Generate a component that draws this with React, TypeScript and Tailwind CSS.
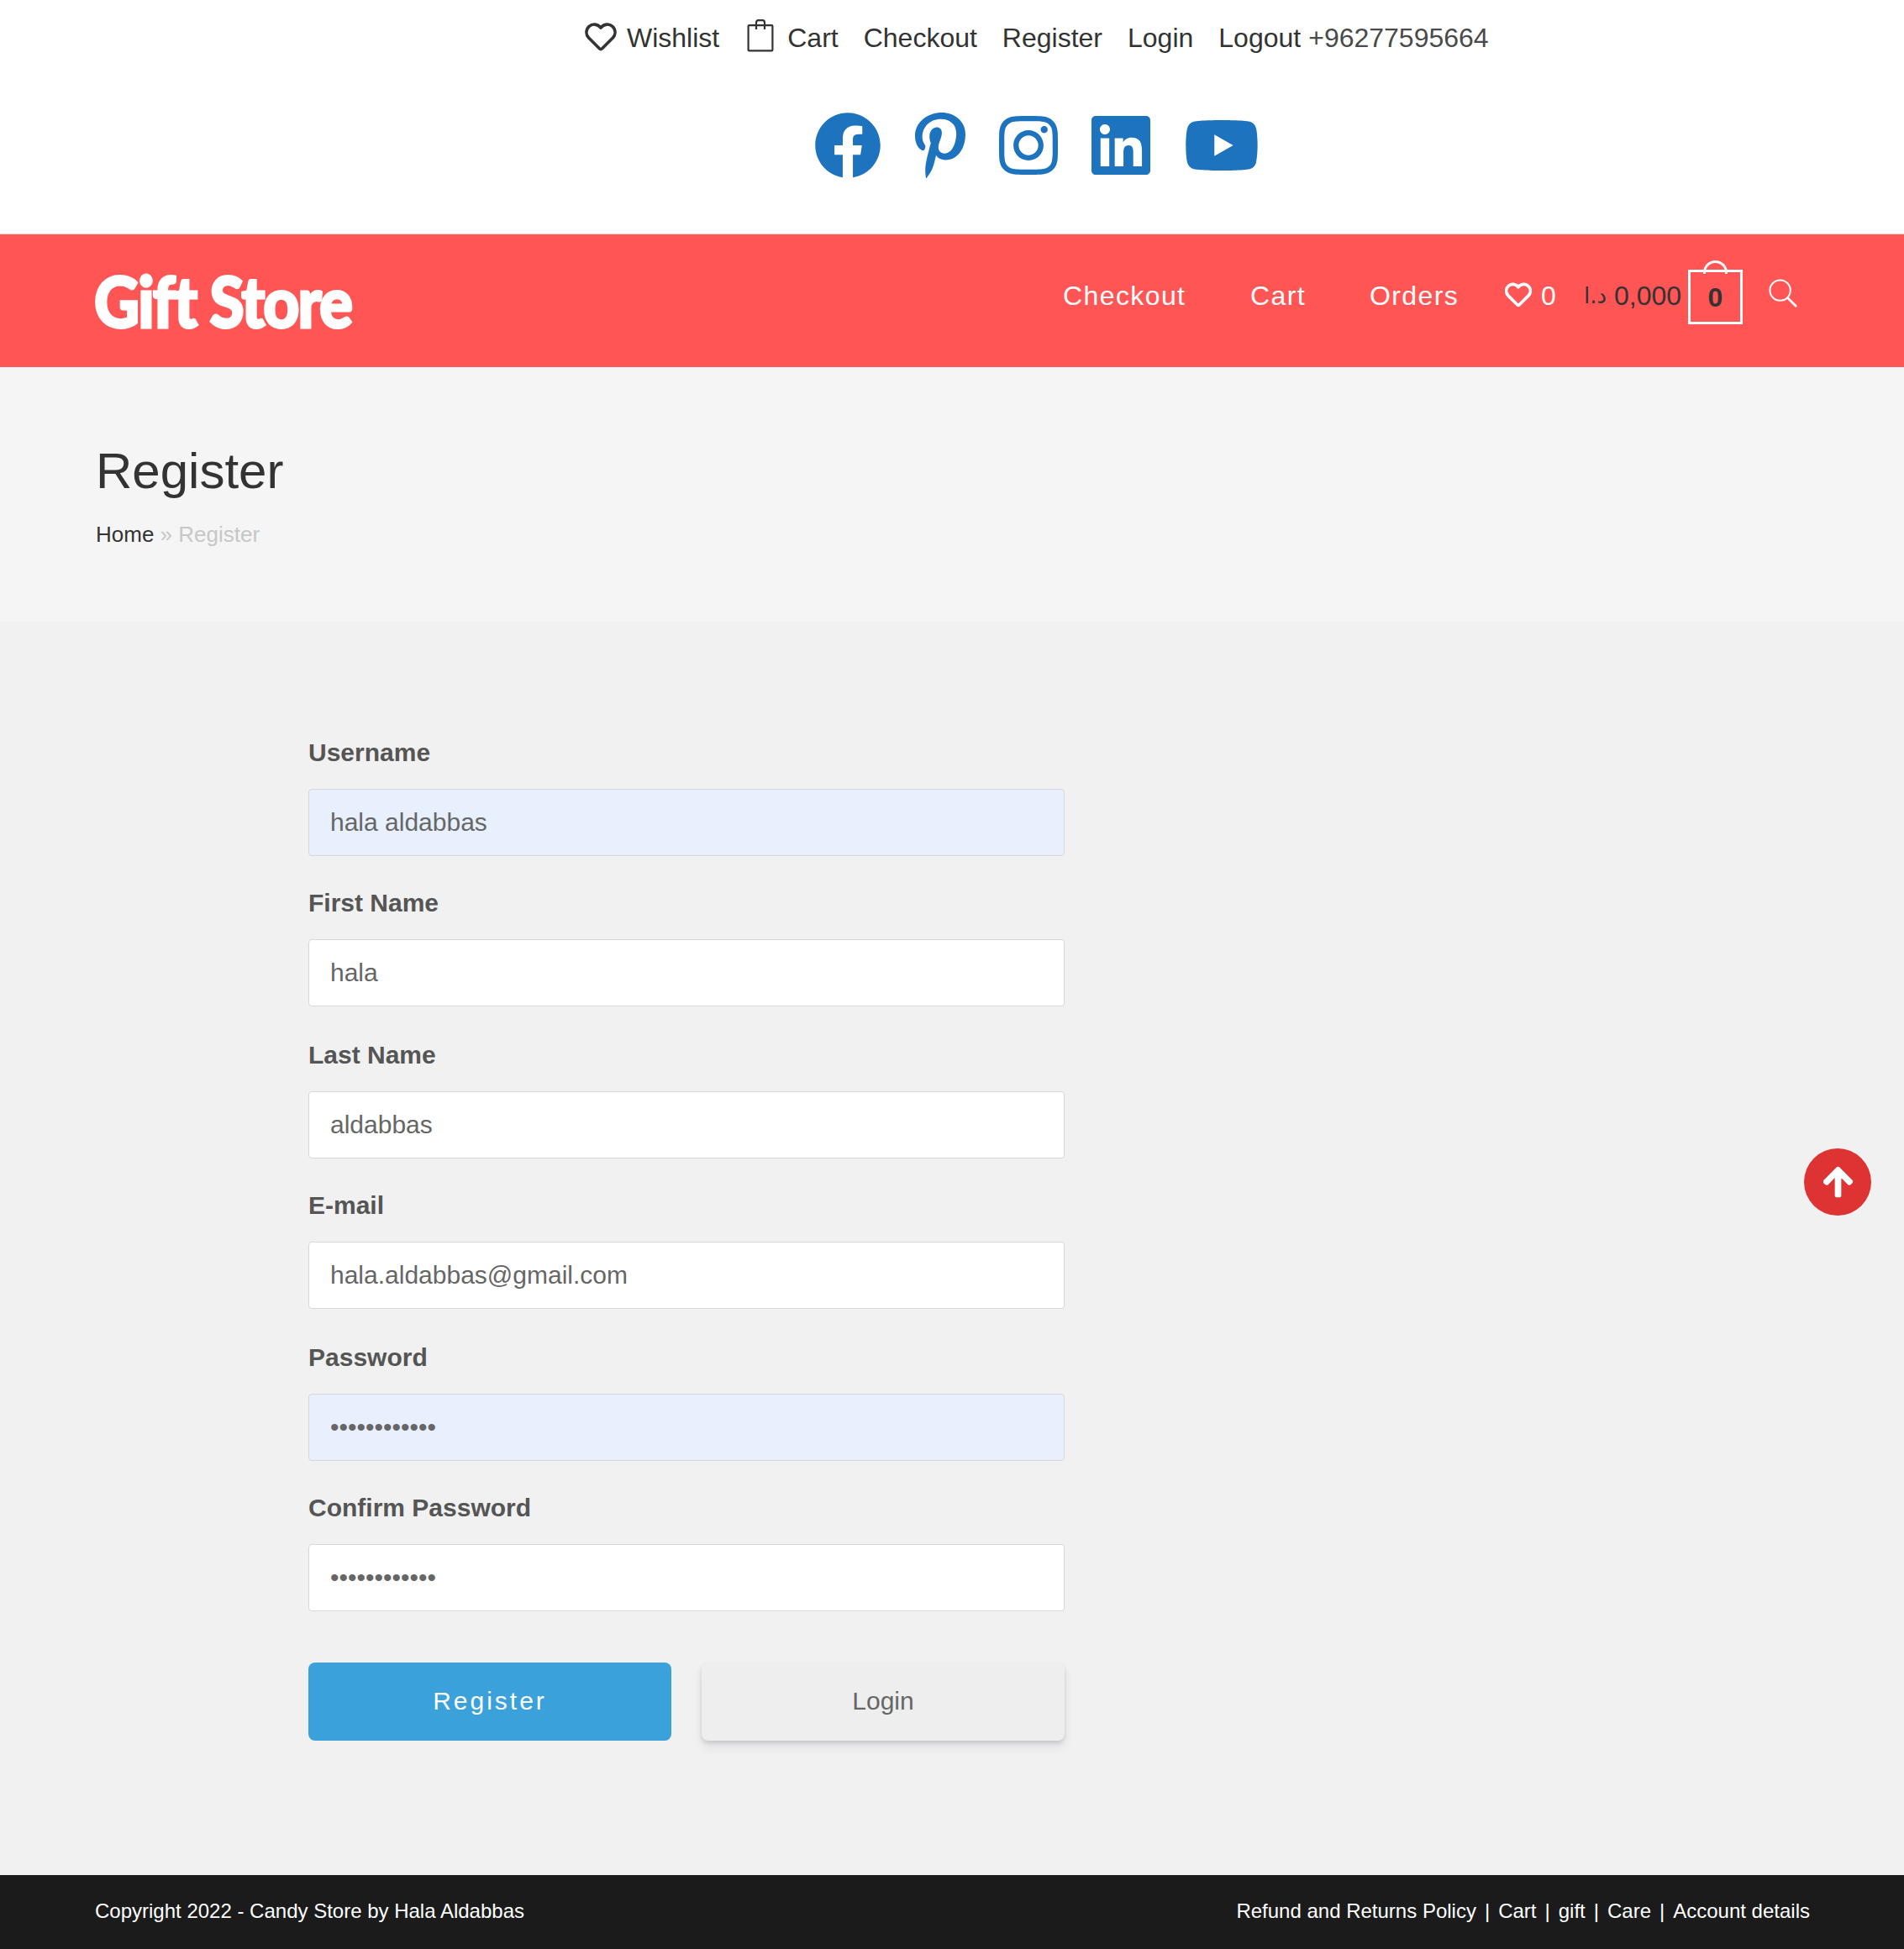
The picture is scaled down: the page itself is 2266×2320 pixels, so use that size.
import React from "react";
import { FaFacebook, FaPinterestP, FaInstagram, FaLinkedin, FaYoutube, FaArrowUp } from "react-icons/fa";

function Heart({ className }: { className: string }) {
  return (
    <svg viewBox="0 0 38 34" className={className} fill="none" stroke="currentColor" strokeLinejoin="round">
      <path d="M19 6 C15 1.2 9 1 5.2 4.3 C1 8.5 1 14 4.6 18 L17.6 31 Q19 32.2 20.4 31 L33.4 18 C37 14 37 8.5 32.8 4.3 C29 1 23 1.2 19 6Z" />
    </svg>
  );
}

function Bag() {
  return (
    <svg viewBox="0 0 32 40" className="h-10 w-8" fill="none" stroke="currentColor" strokeWidth="2.2">
      <rect x="1.6" y="8.2" width="28.8" height="30.2" rx="1" />
      <path d="M11 13V5Q11 2.2 13.5 2.2H18.5Q21 2.2 21 5V13" />
    </svg>
  );
}

const fields = [
  { label: "Username", value: "hala aldabbas", filled: true },
  { label: "First Name", value: "hala", filled: false },
  { label: "Last Name", value: "aldabbas", filled: false },
  { label: "E-mail", value: "hala.aldabbas@gmail.com", filled: false },
  { label: "Password", value: "••••••••••••", filled: true },
  { label: "Confirm Password", value: "••••••••••••", filled: false },
];

const footerLinks = ["Refund and Returns Policy", "Cart", "gift", "Care", "Account details"];

export default function App() {
  return (
    <div className="relative flex h-[2320px] w-[2266px] flex-col overflow-hidden bg-[#f1f1f1] font-['Liberation_Sans',Arial,sans-serif] text-[#333]">
      <div className="h-[279px] border-b border-[#f1d5d5] bg-white">
        <div className="flex h-[90px] items-center pl-[696px] text-[32px] leading-[36px] whitespace-nowrap">
          <Heart className="mt-[-3px] h-[34px] w-[38px] stroke-[3.6]" />
          <a className="ml-[12px]">Wishlist</a>
          <span className="mt-[-6px] ml-[33px]"><Bag /></span>
          <a className="ml-[16px]">Cart</a>
          <a className="ml-[30px]">Checkout</a>
          <a className="ml-[30px]">Register</a>
          <a className="ml-[30px]">Login</a>
          <a className="ml-[30px]">Logout</a>
          <span className="ml-[9px] text-[#4a4a4a]">+96277595664</span>
        </div>
        <div className="mt-[43px] flex gap-10 pl-[969px] text-[#1e73be]">
          <FaFacebook className="h-20 w-20" />
          <FaPinterestP className="h-20 w-[60px]" />
          <FaInstagram className="h-20 w-[70px]" />
          <FaLinkedin className="h-20 w-[70px]" />
          <FaYoutube className="h-20 w-[90px]" />
        </div>
      </div>

      <header className="flex h-[158px] items-start bg-[#ff5555] text-[32px] leading-[36px] whitespace-nowrap text-white">
        <div className="mt-[29px] ml-[112px] w-[1153px]">
          <span className="inline-block origin-left scale-x-[0.9] font-['Lato',sans-serif] text-[83px] leading-[100px] font-black tracking-[-2px] [-webkit-text-stroke:3px_white]">Gift Store</span>
        </div>
        <nav className="mt-[55px] flex tracking-[1.4px]">
          <a className="w-[223px]">Checkout</a>
          <a className="w-[142px]">Cart</a>
          <a className="w-[161px]">Orders</a>
        </nav>
        <Heart className="mt-[57px] h-[30px] w-[32px] stroke-[4.4]" />
        <span className="mt-[55px] ml-[11px] w-[52px]">0</span>
        <span className="mt-[55px] w-[35px] pr-[9px] font-['DejaVu_Sans',sans-serif] text-[26px] text-[#333]" dir="rtl">د.ا</span>
        <span className="mt-[55px] w-[88px] text-[#333]">0,000</span>
        <span className="relative mt-[42px] flex h-[65px] w-[65px] items-center justify-center border-3 border-white font-bold text-[#333]">
          0
          <span className="absolute top-[-14px] left-[15px] h-[16px] w-[29px] rounded-t-full border-3 border-b-0 border-white" />
        </span>
        <svg viewBox="0 0 34 34" className="mt-[53px] ml-[31px] h-[34px] w-[34px]" fill="none" stroke="currentColor" strokeWidth="2">
          <circle cx="13.6" cy="13.6" r="12.2" />
          <path d="M22 22L33 33" strokeWidth="2.6" />
        </svg>
      </header>

      <section className="h-[303px] bg-[#f5f5f5] pl-[114px]">
        <h1 className="pt-[90px] text-[60px] leading-[68px]">Register</h1>
        <div className="mt-[26px] text-[26px] leading-[30px] text-[#c7c7c7]">
          <a className="text-[#333]">Home</a> » Register
        </div>
      </section>

      <main className="h-[1492px] pt-[139px] pl-[367px]">
        {fields.map((f, i) => (
          <div key={i} className="flex h-[179px] flex-col text-[30px] leading-[34px] even:h-[181px]">
            <label className="font-bold text-[#555]">{f.label}</label>
            <div className={`mt-[26px] flex h-20 w-[900px] items-center rounded border border-[#d8d8d8] pl-[25px] text-[#666] ${f.filled ? "bg-[#e8f0fe]" : "bg-white"}`}>
              {f.value}
            </div>
          </div>
        ))}
        <div className="mt-[20px] flex gap-[36px] text-[30px]">
          <button className="h-[93px] w-[432px] rounded-[8px] bg-[#3ba1da] pb-[2px] tracking-[3px] text-white">Register</button>
          <button className="h-[93px] w-[432px] rounded-[8px] bg-[#eee] pb-[2px] text-[#666] shadow-[0_8px_12px_rgba(50,50,93,0.08),0_3px_5px_rgba(0,0,0,0.12)]">Login</button>
        </div>
      </main>

      <footer className="flex h-[88px] items-start justify-between bg-[#1b1b1b] pt-[29px] pr-[112px] pl-[113px] text-[24px] leading-[28px] text-white">
        <div>Copyright 2022 - Candy Store by Hala Aldabbas</div>
        <div className="flex">
          {footerLinks.map((l, i) => (
            <span key={l} className="flex">
              {i > 0 && <span className="mx-[10px]">|</span>}
              {l}
            </span>
          ))}
        </div>
      </footer>

      <button className="absolute top-[1367px] left-[2147px] flex h-20 w-20 items-center justify-center rounded-full bg-[#dd3333] text-white">
        <FaArrowUp className="h-10 w-[35px] stroke-current stroke-[18] [stroke-linejoin:round]" />
      </button>
    </div>
  );
}
